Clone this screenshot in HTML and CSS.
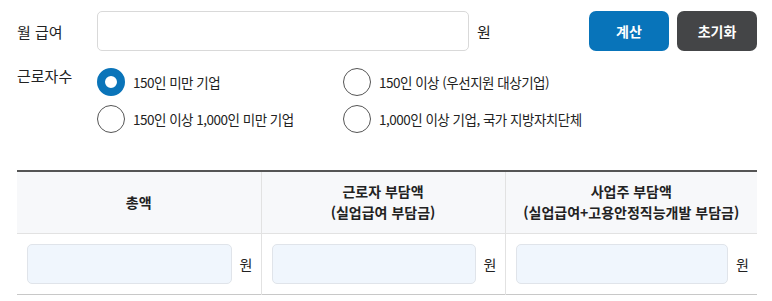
FILE: index.html
```html
<!DOCTYPE html>
<html lang="ko">
<head>
<meta charset="utf-8">
<link rel="stylesheet" href="styles.css">
</head>
<body>
<div class="calc">
  <div class="row salary">
    <div class="label">월 급여</div>
    <input class="field" type="text">
    <span class="unit">원</span>
    <div class="buttons">
      <button class="btn btn-primary">계산</button>
      <button class="btn btn-dark">초기화</button>
    </div>
  </div>
  <div class="row workers">
    <div class="label">근로자수</div>
    <div class="radios">
      <label class="radio"><span class="dot checked"></span>150인 미만 기업</label>
      <label class="radio"><span class="dot"></span>150인 이상 (우선지원 대상기업)</label>
      <label class="radio"><span class="dot"></span>150인 이상 1,000인 미만 기업</label>
      <label class="radio"><span class="dot"></span>1,000인 이상 기업, 국가 지방자치단체</label>
    </div>
  </div>
  <table class="result">
    <thead>
      <tr>
        <th class="c1">총액</th>
        <th class="c2">근로자 부담액<br>(실업급여 부담금)</th>
        <th class="c3">사업주 부담액<br>(실업급여+고용안정직능개발 부담금)</th>
      </tr>
    </thead>
    <tbody>
      <tr>
        <td><div class="cell"><input class="out" type="text"><span class="unit">원</span></div></td>
        <td><div class="cell"><input class="out" type="text"><span class="unit">원</span></div></td>
        <td><div class="cell"><input class="out" type="text"><span class="unit">원</span></div></td>
      </tr>
    </tbody>
  </table>
</div>
</body>
</html>
```
FILE: styles.css
```css
* { box-sizing: border-box; }
body {
  margin: 0;
  font-family: "Noto Sans CJK KR", "Noto Sans", sans-serif;
  color: #222;
  background: #fff;
}
.calc {
  width: 757px;
  padding: 11px 0 0 17px;
}
.row { display: flex; }
.label {
  width: 80px;
  font-size: 15px;
  color: #222;
  flex: none;
}
.salary { align-items: center; height: 40px; }
.field {
  width: 372px;
  height: 40px;
  border: 1px solid #d9d9d9;
  border-radius: 5px;
  background: #fff;
  outline: none;
}
.unit {
  font-size: 15px;
  margin-left: 8px;
  color: #222;
}
.buttons {
  margin-left: auto;
  display: flex;
  gap: 8px;
}
.btn {
  width: 80px;
  height: 40px;
  border: none;
  border-radius: 7px;
  color: #fff;
  font-family: inherit;
  font-size: 14px;
  font-weight: bold;
}
.btn-primary { background: #0874ba; }
.btn-dark { background: #444547; }
.workers { margin-top: 17px; }
.workers .label { line-height: 20px; margin-top: -2px; }
.radios {
  display: grid;
  grid-template-columns: 246px auto;
  row-gap: 9px;
}
.radio {
  display: flex;
  align-items: center;
  height: 28px;
  font-size: 13.5px;
  color: #222;
  letter-spacing: -0.5px;
}
.dot {
  width: 28px;
  height: 28px;
  border: 1px solid #555;
  border-radius: 50%;
  margin-right: 8px;
  flex: none;
}
.dot.checked {
  border: 8.5px solid #0a74b9;
}
.result {
  margin-top: 37px;
  border-collapse: collapse;
  width: 740px;
  border-top: 2px solid #555;
  border-bottom: 1px solid #c8c8c8;
}
.result th {
  height: 62px;
  background: #f7f8fa;
  font-size: 14px;
  font-weight: bold;
  line-height: 21px;
  color: #222;
  border-bottom: 1px solid #e2e2e2;
  padding: 0;
}
.result th + th, .result td + td { border-left: 1px solid #e2e2e2; }
.c1, .c2 { width: 244px; }
.c3 { width: 252px; }
.result td { height: 61px; padding: 0; }
.cell {
  display: flex;
  align-items: center;
  padding: 0 8px 0 10px;
}
.out {
  flex: 1;
  min-width: 0;
  height: 40px;
  border: 1px solid #e0e4ea;
  border-radius: 5px;
  background: #f0f6fd;
  outline: none;
}
.cell .unit { font-size: 14px; margin-left: 8px; }
```
